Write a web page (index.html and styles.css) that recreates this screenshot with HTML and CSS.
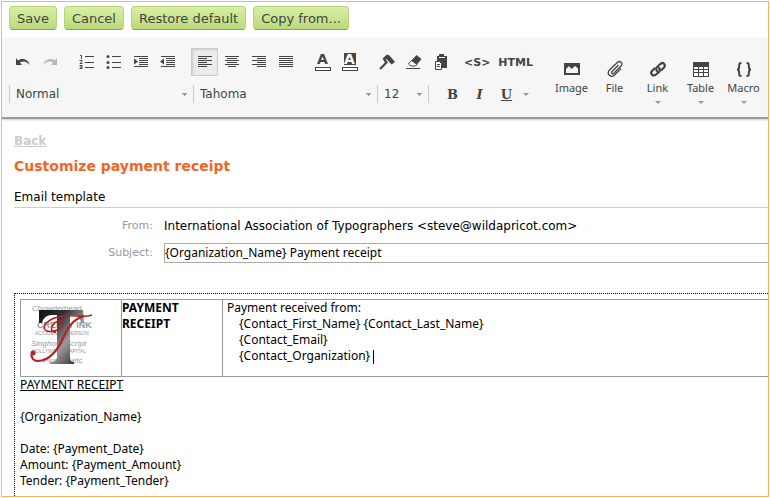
FILE: index.html
```
<!DOCTYPE html>
<html lang="en">
  <head>
    <meta charset="UTF-8">
    <meta name="viewport" content="width=device-width, initial-scale=1">
    <title>Customize payment receipt</title>
    <link rel="stylesheet" href="styles.css">
  </head>
  <body>
    <div class="frame">
      <div class="actions">
        <button class="btn">Save</button>
        <button class="btn">Cancel</button>
        <button class="btn">Restore default</button>
        <button class="btn">Copy from...</button>
      </div>

      <div class="toolbar">
        <div class="tools">
          <div class="tool-row">
            <div class="group">
              <button class="tool" aria-label="Undo"><svg width="16" height="16"><path d="M1 4v7h6L4.800 8.600C8 6.500 12 7 14.500 11c-.5-5-6.500-8-11.500-4.600z" fill="#444"/></svg></button>
              <button class="tool" aria-label="Redo"><svg width="16" height="16"><path d="M15 4v7H9l2.200-2.400C8 6.500 4 7 1.500 11c.5-5 6.500-8 11.500-4.600z" fill="#b8b8b8"/></svg></button>
            </div>
            <div class="group">
              <button class="tool" aria-label="Numbered list"><svg width="16" height="16"><path d="M6 2.500h9M6 8.500h9M6 13.500h9M1 1.500h1.500V5M.5 6.500H3v1L1 9.500h2.500M.5 11.500H3v3H.5M1 13h2" fill="none" stroke="#444"/></svg></button>
              <button class="tool" aria-label="Bulleted list"><svg width="16" height="16"><path d="M6 2.500h9M6 8.500h9M6 13.500h9" stroke="#444"/><g fill="#444"><circle cx="2" cy="2.500" r="1.500"/><circle cx="2" cy="8.500" r="1.500"/><circle cx="2" cy="13.500" r="1.500"/></g></svg></button>
              <button class="tool" aria-label="Increase indent"><svg width="16" height="16"><path d="M1 2.500h14M6 4.500h9M6 6.500h9M6 8.500h9M6 10.500h9M1 12.500h14" stroke="#444"/><path d="M1 4.500v6l4-3z" fill="#444"/></svg></button>
              <button class="tool" aria-label="Decrease indent"><svg width="16" height="16"><path d="M1 2.500h14M6 4.500h9M6 6.500h9M6 8.500h9M6 10.500h9M1 12.500h14" stroke="#444"/><path d="M4 4.500v6l-4-3z" fill="#444"/></svg></button>
            </div>
            <div class="group">
              <button class="tool active" aria-label="Align left"><svg width="16" height="16"><path d="M1 2.500h14M1 4.500h9M1 6.500h14M1 8.500h9M1 10.500h14M1 12.500h9" stroke="#444"/></svg></button>
              <button class="tool" aria-label="Align center"><svg width="16" height="16"><path d="M1 2.500h14M3 4.500h10M1 6.500h14M3 8.500h10M1 10.500h14M4 12.500h8" stroke="#444"/></svg></button>
              <button class="tool" aria-label="Align right"><svg width="16" height="16"><path d="M1 2.500h14M6 4.500h9M1 6.500h14M6 8.500h9M1 10.500h14M6 12.500h9" stroke="#444"/></svg></button>
              <button class="tool" aria-label="Justify"><svg width="16" height="16"><path d="M1 2.500h14M1 4.500h14M1 6.500h14M1 8.500h14M1 10.500h14M1 12.500h14" stroke="#444"/></svg></button>
            </div>
            <div class="group">
              <button class="tool color" aria-label="Text color"><span class="letter">A</span><span class="swatch"></span></button>
              <button class="tool color" aria-label="Background color"><span class="letter dark">A</span><span class="swatch"></span></button>
            </div>
            <div class="group">
              <button class="tool" aria-label="Format painter"><svg width="16" height="16"><path d="M1 15l6.500-6.500L5 5" fill="none" stroke="#444" stroke-width="2.200"/><path d="M3.500 4.500L8 .5l2.500 1L16 8l-3.500 2.500L7.500 5 5 6z" fill="#444"/></svg></button>
              <button class="tool" aria-label="Clear formatting"><svg width="16" height="16"><path d="M10.500 1l5 4-4.500 5.500-5.500-4z" fill="#444"/><path d="M5.500 6.500l5.500 4-1.500 1.500H5L2.500 10z" fill="#fff" stroke="#444"/><path d="M0 14.500h14" stroke="#444"/></svg></button>
              <button class="tool" aria-label="Paste"><svg width="16" height="16"><path d="M4 2h2V0h5v2h3v12H4z" fill="#444"/><path d="M6 3.500h6" stroke="#f6f6f6"/><path d="M2.500 7.500h4l2 2v6h-6z" fill="#fff" stroke="#444"/><path d="M4 10.500h3M4 12.500h3" stroke="#444"/></svg></button>
            </div>
            <button class="tool word">&lt;S&gt;</button>
            <button class="tool word">HTML</button>
          </div>
          <div class="tool-row">
            <select class="pick wide" aria-label="Paragraph style"><option>Normal</option></select>
            <select class="pick wide" aria-label="Font"><option>Tahoma</option></select>
            <select class="pick" aria-label="Font size"><option>12</option></select>
            <div class="group styles">
              <button class="tool serif" aria-label="Bold">B</button>
              <button class="tool serif italic" aria-label="Italic">I</button>
              <button class="tool serif underline" aria-label="Underline">U</button>
              <button class="more" aria-label="More styles"><span class="caret"></span></button>
            </div>
          </div>
        </div>
        <div class="inserts">
          <button class="insert"><svg width="18" height="18"><path d="M1 3h16v12H1z" fill="#444"/><path d="M3 13V9l3-3 2.500 3L12 6l3 2.500V13z" fill="#f6f6f6"/></svg>Image</button>
          <button class="insert"><svg width="18" height="18"><path d="M12.500 5L6 11.500c-1.500 1.500.5 3 1.800 1.800L15 6c2.500-3-1-6-3.700-3.500L3.500 10c-3.500 4 1.500 8.500 5 5L15 8.500" fill="none" stroke="#444" stroke-width="1.300"/></svg>File</button>
          <button class="insert"><svg width="18" height="18"><g fill="none" stroke="#444" stroke-width="2.200" stroke-linecap="round"><path d="M8 11C6 8.500 7.500 7.500 11 4.200c3-3 6.500.8 4 3.300L12.500 10"/><path d="M10 8c2 2.500.5 3.500-3 6.500-3 2.500-6.300-1-4-3.500L5.500 8.500"/></g></svg>Link<span class="caret"></span></button>
          <button class="insert"><svg width="18" height="18"><path d="M1 2h16v15H1z" fill="#444"/><path d="M2 7h4v2H2zM7 7h4v2H7zM12 7h4v2h-4zM2 10h4v2H2zM7 10h4v2H7zM12 10h4v2h-4zM2 13h4v3H2zM7 13h4v3H7zM12 13h4v3h-4z" fill="#fff"/></svg>Table<span class="caret"></span></button>
          <button class="insert"><svg width="18" height="18"><path d="M6.500 3C4 3 4.200 4 4.200 6S4 9.500 2 9.500c2 0 2.200 1.500 2.200 3.500S4 16 6.500 16M11.500 3C14 3 13.800 4 13.800 6s.2 3.500 2.200 3.500c-2 0-2.200 1.500-2.200 3.500s.2 3-2.300 3" fill="none" stroke="#444" stroke-width="2"/></svg>Macro<span class="caret"></span></button>
        </div>
      </div>

      <div class="content">
        <a class="back" href="#">Back</a>
        <h1>Customize payment receipt</h1>
        <h2>Email template</h2>
        <div class="field">
          <span class="label">From:</span>
          <span class="from">International Association of Typographers &lt;steve@wildapricot.com&gt;</span>
        </div>
        <div class="field">
          <label class="label" for="subject">Subject:</label>
          <input class="subject" id="subject" type="text" value="{Organization_Name} Payment receipt">
        </div>

        <div class="editor">
          <table class="receipt">
            <tr>
              <td class="logo-cell">
                <svg class="logo" width="66" height="66" viewBox="0 0 66 66">
                  <defs>
                    <linearGradient id="steel" x1="0" y1="0" x2="1" y2="1">
                      <stop offset="0" stop-color="#111"/>
                      <stop offset=".3" stop-color="#333"/>
                      <stop offset=".6" stop-color="#999"/>
                      <stop offset="1" stop-color="#111"/>
                    </linearGradient>
                  </defs>
                  <g class="logo-words">
                    <text x="2" y="6" font-size="8">Chowderhead</text>
                    <text x="7" y="23" font-size="9" font-weight="bold">CREEPY INK</text>
                    <text x="5" y="30" font-size="5">ACCIDENTAL PERSON</text>
                    <text x="1" y="41" font-size="8" font-style="italic">Singhowl Script</text>
                    <text x="2" y="48" font-size="5">HOLLYWOOD CAPITAL</text>
                    <text x="13" y="58" font-size="8">Plumbs etc</text>
                  </g>
                  <path d="M9 5h44l1 13h-3q-1-8-8-8h-3v42q0 5 4 5v2H20v-2q7 0 7-5V10h-5q-8 0-10 8H9z" fill="url(#steel)"/>
                  <path d="M62 10C54 13 44 10 34 11 22 12 14 18 14 23c1 6 16 4 19-4 1-5-7-4-10 1-3 4-1 8 3 7" fill="none" stroke="#b3202a" stroke-width="1.500"/>
                  <path d="M54 11C41 15 37 25 33 33 28 45 19 56 8 56 2 56 0 50 3 47" fill="none" stroke="#b3202a" stroke-width="2.200"/>
                  <circle cx="3" cy="48" r="2.500" fill="#b3202a"/>
                </svg>
              </td>
              <td class="heading-cell">PAYMENT RECEIPT</td>
              <td class="from-cell">
                Payment received from:
                <div class="contact">{Contact_First_Name} {Contact_Last_Name}<br>{Contact_Email}<br>{Contact_Organization} <span class="cursor"></span></div>
              </td>
            </tr>
          </table>
          <p><u>PAYMENT RECEIPT</u></p>
          <p>{Organization_Name}</p>
          <p>Date: {Payment_Date}<br>Amount: {Payment_Amount}<br>Tender: {Payment_Tender}</p>
        </div>
      </div>
    </div>
  </body>
</html>
```
FILE: styles.css
```
* { box-sizing: border-box; }
body {
  margin: 1px;
  background: #fff;
  color: #000;
  font-family: Verdana, "DejaVu Sans", sans-serif;
  font-size: 12px;
}
button {
  margin: 0;
  padding: 0;
  border: 0;
  background: none;
  color: #444;
  font-family: inherit;
  cursor: pointer;
}
svg { display: block; }

.frame {
  display: flex;
  flex-direction: column;
  min-height: calc(100vh - 2px);
  border: 1px solid #fdb15c;
  overflow: hidden;
}
.actions {
  display: flex;
  gap: 7px;
  padding: 4px 7px 8px;
}
.btn {
  height: 24px;
  padding: 0 7px;
  border: 1px solid #b4d578;
  border-bottom-color: #84a84c;
  border-radius: 4px;
  background: linear-gradient(#d9efa4, #b9da7c);
  font-size: 13px;
}

/* editor toolbar */
.toolbar {
  display: flex;
  justify-content: space-between;
  padding: 10px 3px 13px 7px;
  background: #f6f6f6;
  border-bottom: 2px solid #999;
  box-shadow: 0 1px 2px #ccc;
}
.tools {
  display: flex;
  flex-direction: column;
  gap: 9px;
}
.tool-row {
  display: flex;
  align-items: center;
}
.group {
  display: flex;
  margin-right: 10px;
}
.tool {
  display: flex;
  flex-direction: column;
  align-items: center;
  justify-content: center;
  width: 27px;
  height: 28px;
}
.active {
  background: #ebebeb;
  border: 1px solid #ccc;
  box-shadow: inset 1px 1px 2px #ccc;
}
.letter {
  width: 12px;
  font-size: 14px;
  font-weight: bold;
  line-height: 12px;
}
.dark {
  background: #444;
  color: #fff;
}
.swatch {
  width: 16px;
  height: 4px;
  margin-top: 2px;
  border: 1px solid #444;
  background: #fff;
}
.word {
  width: auto;
  margin-right: 8px;
  font-size: 11px;
  font-weight: bold;
}
.pick {
  width: 51px;
  height: 18px;
  padding: 0 6px;
  border: 0;
  border-left: 1px solid #ccc;
  border-radius: 0;
  appearance: none;
  background: linear-gradient(#999, #999) no-repeat right 6px top 8px / 5px 1px,
    linear-gradient(#999, #999) no-repeat right 7px top 9px / 3px 1px,
    linear-gradient(#999, #999) no-repeat right 8px top 10px / 1px 1px;
  color: #444;
  font-family: inherit;
  font-size: 12px;
}
.wide { width: 184px; }
.styles {
  padding-left: 10px;
  border-left: 1px solid #ccc;
}
.styles .tool, .more { height: 18px; }
.serif {
  font-family: "DejaVu Serif", serif;
  font-size: 13px;
  font-weight: bold;
}
.italic { font-style: italic; }
.underline { text-decoration: underline; }
.more {
  display: flex;
  align-items: center;
  justify-content: center;
  width: 12px;
}
.caret {
  display: inline-block;
  border: 3px solid transparent;
  border-top-color: #999;
  border-bottom: 0;
}
.inserts {
  display: flex;
  padding-top: 12px;
}
.insert {
  display: flex;
  flex-direction: column;
  align-items: center;
  width: 43px;
  font-family: Tahoma, "Noto Sans", sans-serif;
  font-size: 11px;
  line-height: 20px;
}
.insert .caret { margin-top: 3px; }

/* form */
.content {
  flex: 1;
  display: flex;
  flex-direction: column;
  padding: 14px 0 0 12px;
}
.back {
  align-self: flex-start;
  color: #ccc;
  font-size: 12px;
  font-weight: bold;
  line-height: 16px;
}
h1 {
  margin: 8px 0 0;
  color: #f26522;
  font-size: 14px;
  line-height: 18px;
}
h2 {
  margin: 12px 0 4px;
  border-bottom: 1px solid #ccc;
  font-size: 12px;
  font-weight: normal;
  line-height: 20px;
}
.field {
  display: flex;
  align-items: center;
  min-height: 27px;
}
.label {
  width: 139px;
  margin-right: 11px;
  color: #999;
  font-size: 11px;
  text-align: right;
}
.subject {
  flex: 1;
  height: 20px;
  padding: 0;
  border: 1px solid #aaa;
  border-right: 0;
  font-family: Tahoma, "Noto Sans", sans-serif;
  font-size: 12px;
}

/* email body */
.editor {
  flex: 1;
  margin-top: 27px;
  padding: 5px 0 0 5px;
  border: 1px dotted #000;
  border-right: 0;
  border-bottom: 0;
  font-family: Tahoma, "Noto Sans", sans-serif;
  font-size: 12px;
  line-height: 16px;
}
.receipt {
  width: 100%;
  height: 78px;
  border-collapse: collapse;
}
.receipt td {
  padding: 0;
  border: 1px solid #999;
  border-right: 0;
  vertical-align: top;
}
.logo-cell, .heading-cell { width: 101px; }
.logo { margin: 5px 9px; }
.logo-words {
  fill: #999;
  font-family: "Liberation Sans", sans-serif;
}
.heading-cell { font-weight: bold; }
.receipt .from-cell { padding-left: 4px; }
.contact { padding-left: 12px; }
.cursor {
  display: inline-block;
  height: 14px;
  border-left: 1px solid #000;
  vertical-align: middle;
}
p { margin: 0 0 16px; }
p:last-child { margin: 0; }
```
